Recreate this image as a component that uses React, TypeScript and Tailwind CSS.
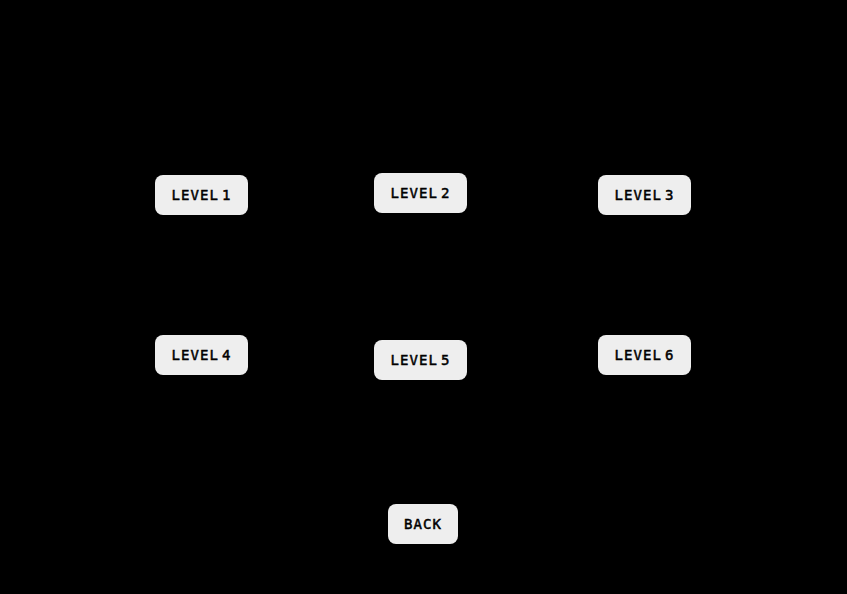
import React from "react";

function MenuButton({ label, className = "" }: { label: string; className?: string }) {
  return (
    <button
      type="button"
      className={`flex h-10 shrink-0 items-center justify-center whitespace-pre rounded-lg bg-[#eeeeee] font-['DejaVu_Sans_Mono','Liberation_Mono',monospace] text-[14px] font-normal leading-5 tracking-[1.1px] [word-spacing:-6.5px] text-black [-webkit-text-stroke:0.5px_black] ${className}`}
    >
      {label}
    </button>
  );
}

export default function App() {
  return (
    <main className="flex h-[594px] w-[847px] flex-col overflow-hidden bg-black pt-[173px]">
      <div className="flex h-[167px] items-start pl-[155px]">
        <MenuButton label="LEVEL 1" className="mt-0.5 w-[93px]" />
        <MenuButton label="LEVEL 2" className="ml-[126px] w-[93px]" />
        <MenuButton label="LEVEL 3" className="ml-[131px] mt-0.5 w-[93px]" />
      </div>
      <div className="-mt-[5px] flex h-[169px] items-start pl-[155px]">
        <MenuButton label="LEVEL 4" className="w-[93px]" />
        <MenuButton label="LEVEL 5" className="ml-[126px] mt-[5px] w-[93px]" />
        <MenuButton label="LEVEL 6" className="ml-[131px] w-[93px]" />
      </div>
      <div className="flex pl-[388px]">
        <MenuButton label="BACK" className="w-[70px]" />
      </div>
    </main>
  );
}
